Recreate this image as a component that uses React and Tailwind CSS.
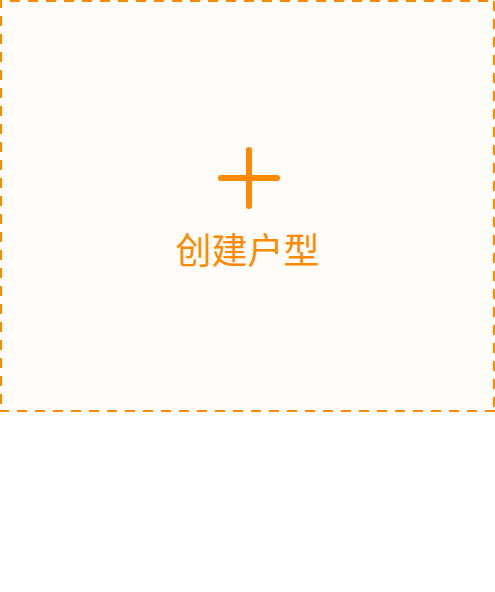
export default function App() {
  return (
    <div className="w-[495px] h-[592px] bg-white">
      {/* Create card, dashed border drawn with gradients to match dash length */}
      <button className="w-[495px] h-[412px] flex flex-col items-center justify-center bg-[#fffcf9] text-[#ff8a00] [background-image:linear-gradient(90deg,#ff8a00_10px,transparent_10px),linear-gradient(90deg,#ff8a00_10px,transparent_10px),linear-gradient(180deg,#ff8a00_10px,transparent_10px),linear-gradient(180deg,#ff8a00_10px,transparent_10px)] [background-size:18px_2px,18px_2px,2px_18px,2px_18px] [background-position:10px_0,17px_100%,0_16px,100%_1px] [background-repeat:repeat-x,repeat-x,repeat-y,repeat-y]">
        <svg width="62" height="62" viewBox="0 0 62 62" className="mt-[2px] ml-[2px]">
          <path d="M31 3v56M3 31h56" stroke="#ff8a00" strokeWidth="6" strokeLinecap="round" fill="none" />
        </svg>
        <span className="mt-[19px] text-[36px] leading-[40px] font-['Noto_Sans_CJK_SC',sans-serif]">创建户型</span>
      </button>
    </div>
  )
}
